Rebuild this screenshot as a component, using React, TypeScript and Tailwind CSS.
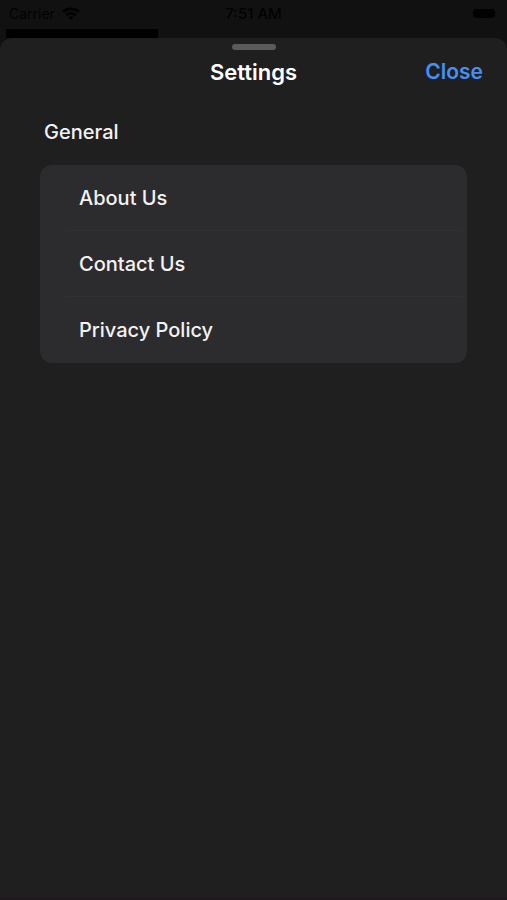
import React from "react";

const items = ["About Us", "Contact Us", "Privacy Policy"];

function WifiIcon() {
  return (
    <svg viewBox="0 0 18 14" className="h-[14px] w-[18px]" fill="none" stroke="#020202" strokeWidth="2.6" aria-hidden="true">
      <path d="M1 4.9C5.6.8 12.4.8 17 4.9" />
      <path d="M4.2 8.2C7 5.8 11 5.8 13.8 8.2" />
      <path d="M6.4 10.2C8 9 10 9 11.6 10.2L9 13Z" fill="#020202" stroke="none" />
    </svg>
  );
}

function StatusBar() {
  return (
    <div className="grid h-[29px] grid-cols-3 items-center px-[9px] pb-[2px] text-[15px] leading-5 text-[#020202]">
      <div className="flex items-center gap-[7px]">
        <span className="text-[14px]">Carrier</span>
        <WifiIcon />
      </div>
      <span className="text-center font-medium">7:51 AM</span>
      <span className="mr-[3px] h-[9px] w-[22px] justify-self-end rounded-[3px] bg-[#020202]" />
    </div>
  );
}

export default function App() {
  return (
    <div className="flex min-h-screen flex-col bg-[#111111] font-['Inter',sans-serif]">
      <StatusBar />
      <div className="ml-[6px] h-[9px] w-[30%] bg-black" />
      <main className="flex grow flex-col rounded-t-[12px] border-b-[3px] border-[#1f1a1d] bg-[#1f1f1f] text-white">
        <div className="mx-auto mt-[6px] h-[6px] w-[44px] rounded-full bg-[#5b5b5b]" />
        <header className="grid grid-cols-3 items-center px-6 pt-[6px] text-[21px] leading-8 font-semibold">
          <h1 className="col-start-2 text-center text-[22px] leading-8">Settings</h1>
          <button type="button" className="justify-self-end text-[#4690f5]">
            Close
          </button>
        </header>
        <section className="px-10 pt-7 text-[20px] leading-8 font-medium text-[#f2f2f2]">
          <h2 className="pl-1">General</h2>
          <ul className="mt-[17px] overflow-hidden rounded-[12px] bg-[#2c2c2e]">
            {items.map((item) => (
              <li key={item} className="group">
                <button type="button" className="flex h-[66px] w-full pl-[25px] text-left">
                  <span className="mr-1 flex grow items-center self-stretch border-b border-[#303032] pl-[14px] group-last:border-transparent">
                    {item}
                  </span>
                </button>
              </li>
            ))}
          </ul>
        </section>
      </main>
    </div>
  );
}
